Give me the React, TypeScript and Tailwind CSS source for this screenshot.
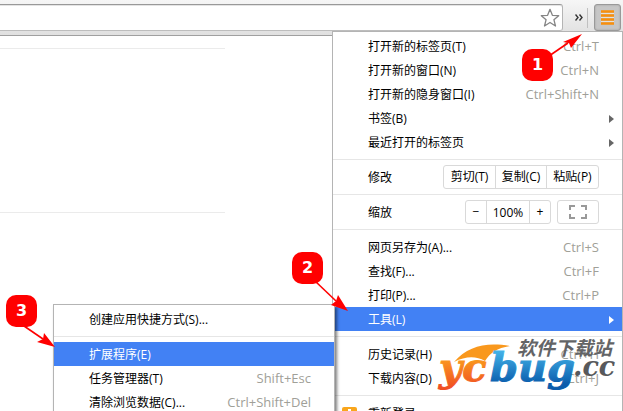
import type { ReactNode } from "react";

interface MenuItemProps {
  label: string;
  shortcut?: string;
  submenu?: boolean;
  active?: boolean;
  icon?: ReactNode;
  children?: ReactNode;
}

function MenuItem({
  label,
  shortcut,
  submenu,
  active,
  icon,
  children,
}: MenuItemProps) {
  return (
    <li className="relative">
      <button
        type="button"
        className={`flex h-6 w-full items-center pt-[2px] pr-2 pl-[35px] text-left ${
          active ? "bg-[#4281f4] text-white" : "text-black"
        }`}
      >
        {icon && <span className="-ml-[26px] w-[26px]">{icon}</span>}
        <span className="grow">{label}</span>
        {shortcut && (
          <span className="mr-[15px] text-[13px] text-[#a0a098]">{shortcut}</span>
        )}
        {submenu && (
          <svg
            viewBox="0 0 5 8"
            className={`h-2 w-[5px] ${active ? "fill-white" : "fill-[#666]"}`}
          >
            <path d="M0 0 L5 4 L0 8 Z" />
          </svg>
        )}
      </button>
      {children}
    </li>
  );
}

function Separator() {
  return <li role="separator" className="my-[5px] h-px bg-[#e6e6e6]" />;
}

function ToolsMenu() {
  return (
    <ul className="absolute -top-[3px] right-full z-10 -mr-[2px] w-[282px] border border-[#b4b4b4] bg-white py-[2px] shadow-[2px_3px_3px_rgba(0,0,0,0.5)]">
      <MenuItem label="创建应用快捷方式(S)..." />
      <Separator />
      <MenuItem label="扩展程序(E)" active />
      <MenuItem label="任务管理器(T)" shortcut="Shift+Esc" />
      <MenuItem label="清除浏览数据(C)..." shortcut="Ctrl+Shift+Del" />
    </ul>
  );
}

function ButtonGroup({ children }: { children: ReactNode }) {
  return (
    <div className="flex h-6 divide-x divide-[#d9d9d9] rounded-[3px] border border-[#d9d9d9]">
      {children}
    </div>
  );
}

function UpdateIcon() {
  return (
    <svg viewBox="0 0 15 15" className="size-[15px]">
      <rect width="15" height="15" rx="2" fill="#f9a61c" />
      <path d="M6 2h3v4h3l-4.500 5L3 6h3z" fill="#fff" />
    </svg>
  );
}

function MainMenu() {
  return (
    <ul className="absolute top-[31px] right-0 w-[291px] border border-[#b4b4b4] bg-white py-[2px]">
      <MenuItem label="打开新的标签页(T)" shortcut="Ctrl+T" />
      <MenuItem label="打开新的窗口(N)" shortcut="Ctrl+N" />
      <MenuItem label="打开新的隐身窗口(I)" shortcut="Ctrl+Shift+N" />
      <MenuItem label="书签(B)" submenu />
      <MenuItem label="最近打开的标签页" submenu />
      <Separator />
      <li className="flex h-6 items-center justify-between pr-[23px] pl-[35px]">
        <span className="pt-[2px]">修改</span>
        <ButtonGroup>
          <button type="button" className="w-[52px]">剪切(T)</button>
          <button type="button" className="w-[51px]">复制(C)</button>
          <button type="button" className="w-[51px]">粘贴(P)</button>
        </ButtonGroup>
      </li>
      <Separator />
      <li className="flex h-6 items-center gap-[6px] pr-[23px] pl-[35px]">
        <span className="grow pt-[2px]">缩放</span>
        <ButtonGroup>
          <button type="button" aria-label="缩小" className="w-[21px]">−</button>
          <span className="w-[43px] text-center leading-6">100%</span>
          <button type="button" aria-label="放大" className="w-5">+</button>
        </ButtonGroup>
        <button
          type="button"
          aria-label="全屏"
          className="flex h-6 w-[42px] items-center justify-center rounded-[3px] border border-[#d9d9d9]"
        >
          <svg viewBox="0 0 18 14" className="h-[14px] w-[18px]" fill="none" stroke="#999" strokeWidth="2">
            <path d="M1 5V1h5M12 1h5v4M17 9v4h-5M6 13H1V9" />
          </svg>
        </button>
      </li>
      <Separator />
      <MenuItem label="网页另存为(A)..." shortcut="Ctrl+S" />
      <MenuItem label="查找(F)..." shortcut="Ctrl+F" />
      <MenuItem label="打印(P)..." shortcut="Ctrl+P" />
      <MenuItem label="工具(L)" submenu active>
        <ToolsMenu />
      </MenuItem>
      <Separator />
      <MenuItem label="历史记录(H)" shortcut="Ctrl+H" />
      <MenuItem label="下载内容(D)" shortcut="Ctrl+J" />
      <Separator />
      <MenuItem label="重新登录" icon={<UpdateIcon />} />
    </ul>
  );
}

function Toolbar() {
  return (
    <header className="flex h-9 items-start border-b border-[#a0a0a0] bg-linear-to-b from-[#f6f6f6] to-[#e0e0e0] pt-1 pr-[2px]">
      <div className="relative grow">
        <input
          type="text"
          aria-label="地址栏"
          className="block h-[27px] w-full rounded-r-[3px] border border-l-0 border-t-[#999] border-r-[#b4b4b4] border-b-[#bdbdbd] bg-white shadow-[inset_0_1px_0_#e4e4e4] outline-none"
        />
        <button type="button" aria-label="收藏" className="absolute top-1 right-[3px]">
          <svg viewBox="0 0 20 20" className="size-5" fill="#fff" stroke="#858585" strokeWidth="1.3" strokeLinejoin="round">
            <path d="M10 1.300 12.400 7.300 18.700 7.700 13.900 11.700 15.500 18 10 14.500 4.500 18 6.100 11.700 1.300 7.700 7.600 7.300Z" />
          </svg>
        </button>
      </div>
      <button type="button" aria-label="更多" className="mt-1 flex h-5 w-[25px] items-center justify-end border-r border-[#c0c0c0] pr-1 pb-[2px]">
        <svg viewBox="0 0 8 7" className="h-[7px] w-2" fill="none" stroke="#333" strokeWidth="1.400">
          <path d="M.5.5 3 3.500.5 6.500M4.500.5 7 3.500 4.500 6.500" />
        </svg>
      </button>
      <button
        type="button"
        aria-label="菜单"
        className="ml-[6px] flex h-[27px] w-[27px] items-center justify-center rounded-[3px] border border-[#999] bg-[#c6c6c6] shadow-[inset_0_0_2px_#999]"
      >
        <svg viewBox="0 0 13 15" className="h-[15px] w-[13px]">
          <path d="M0 3.500h13M0 7.500h13M0 11.500h13" stroke="#e2e2e2" />
          <path d="M0 1.500h13M0 5.500h13M0 9.500h13M0 13.500h13" stroke="#f88f0c" strokeWidth="2.300" />
        </svg>
      </button>
    </header>
  );
}

function Callout({ step, className, line, head }: {
  step: number;
  className: string;
  line: string;
  head: string;
}) {
  return (
    <div className={`absolute z-20 h-8 w-[31px] ${className}`}>
      <svg viewBox="0 0 31 32" className="absolute inset-0 h-8 w-[31px] overflow-visible">
        <path d={line} stroke="#f00" strokeWidth="1.600" />
        <path d={head} fill="#f00" />
      </svg>
      <span className="relative flex h-8 items-center justify-center rounded-[10px] bg-[#f00] font-['DejaVu_Sans'] text-base font-bold text-white">
        {step}
      </span>
    </div>
  );
}

function Watermark() {
  return (
    <svg
      viewBox="0 0 184 58"
      className="absolute top-[338px] right-[2px] z-20 h-[58px] w-[184px]"
      role="img"
      aria-label="ycbug.cc 软件下载站"
    >
      <defs>
        <linearGradient id="orange" gradientUnits="userSpaceOnUse" x1="0" y1="18" x2="0" y2="50">
          <stop offset="0" stopColor="#fba11d" />
          <stop offset="1" stopColor="#f04e23" />
        </linearGradient>
        <linearGradient id="blue" gradientUnits="userSpaceOnUse" x1="0" y1="12" x2="0" y2="46">
          <stop offset="0" stopColor="#45b5ea" />
          <stop offset="1" stopColor="#0a5cac" />
        </linearGradient>
      </defs>
      <path d="M17 24C31 8 49 4 73 8C60 10 53 15 48 23C39 18 29 18 17 24Z" fill="#f9981d" />
      <g fontFamily="'DejaVu Serif', serif" fontWeight="bold" fontStyle="italic">
        <text x="2" y="43" fontSize="40" fill="url(#orange)" stroke="url(#orange)">yc</text>
        <text x="53" y="43" fontSize="40" fill="url(#blue)" stroke="url(#blue)">bug</text>
        <text x="136" y="38" fontSize="27" fill="#58595b">.cc</text>
      </g>
      <text x="80" y="17" fontFamily="'Noto Sans CJK SC', sans-serif" fontSize="19" fontWeight="bold" fontStyle="italic" fill="#636466">
        软件下载站
      </text>
    </svg>
  );
}

export default function App() {
  return (
    <div className="relative h-screen overflow-hidden bg-white font-['Open_Sans','Noto_Sans_CJK_SC',sans-serif] text-xs text-black">
      <Toolbar />
      <main className="w-[225px] pt-3">
        <hr className="border-[#ebebeb]" />
        <hr className="mt-[163px] border-[#ebebeb]" />
      </main>
      <MainMenu />
      <Callout
        step={1}
        className="top-[49px] right-[70px]"
        line="M27 7 L46 -6"
        head="M60 -15 L49 -1 L47 -6 L41 -7 Z"
      />
      <Callout
        step={2}
        className="top-[252px] right-[300px]"
        line="M23 29 L44 49"
        head="M56 59 L39 53 L44 49 L46 43 Z"
      />
      <Callout
        step={3}
        className="top-[295px] right-[586px]"
        line="M18 31 L37 44"
        head="M49 52 L31 47 L37 44 L38 38 Z"
      />
      <Watermark />
    </div>
  );
}
